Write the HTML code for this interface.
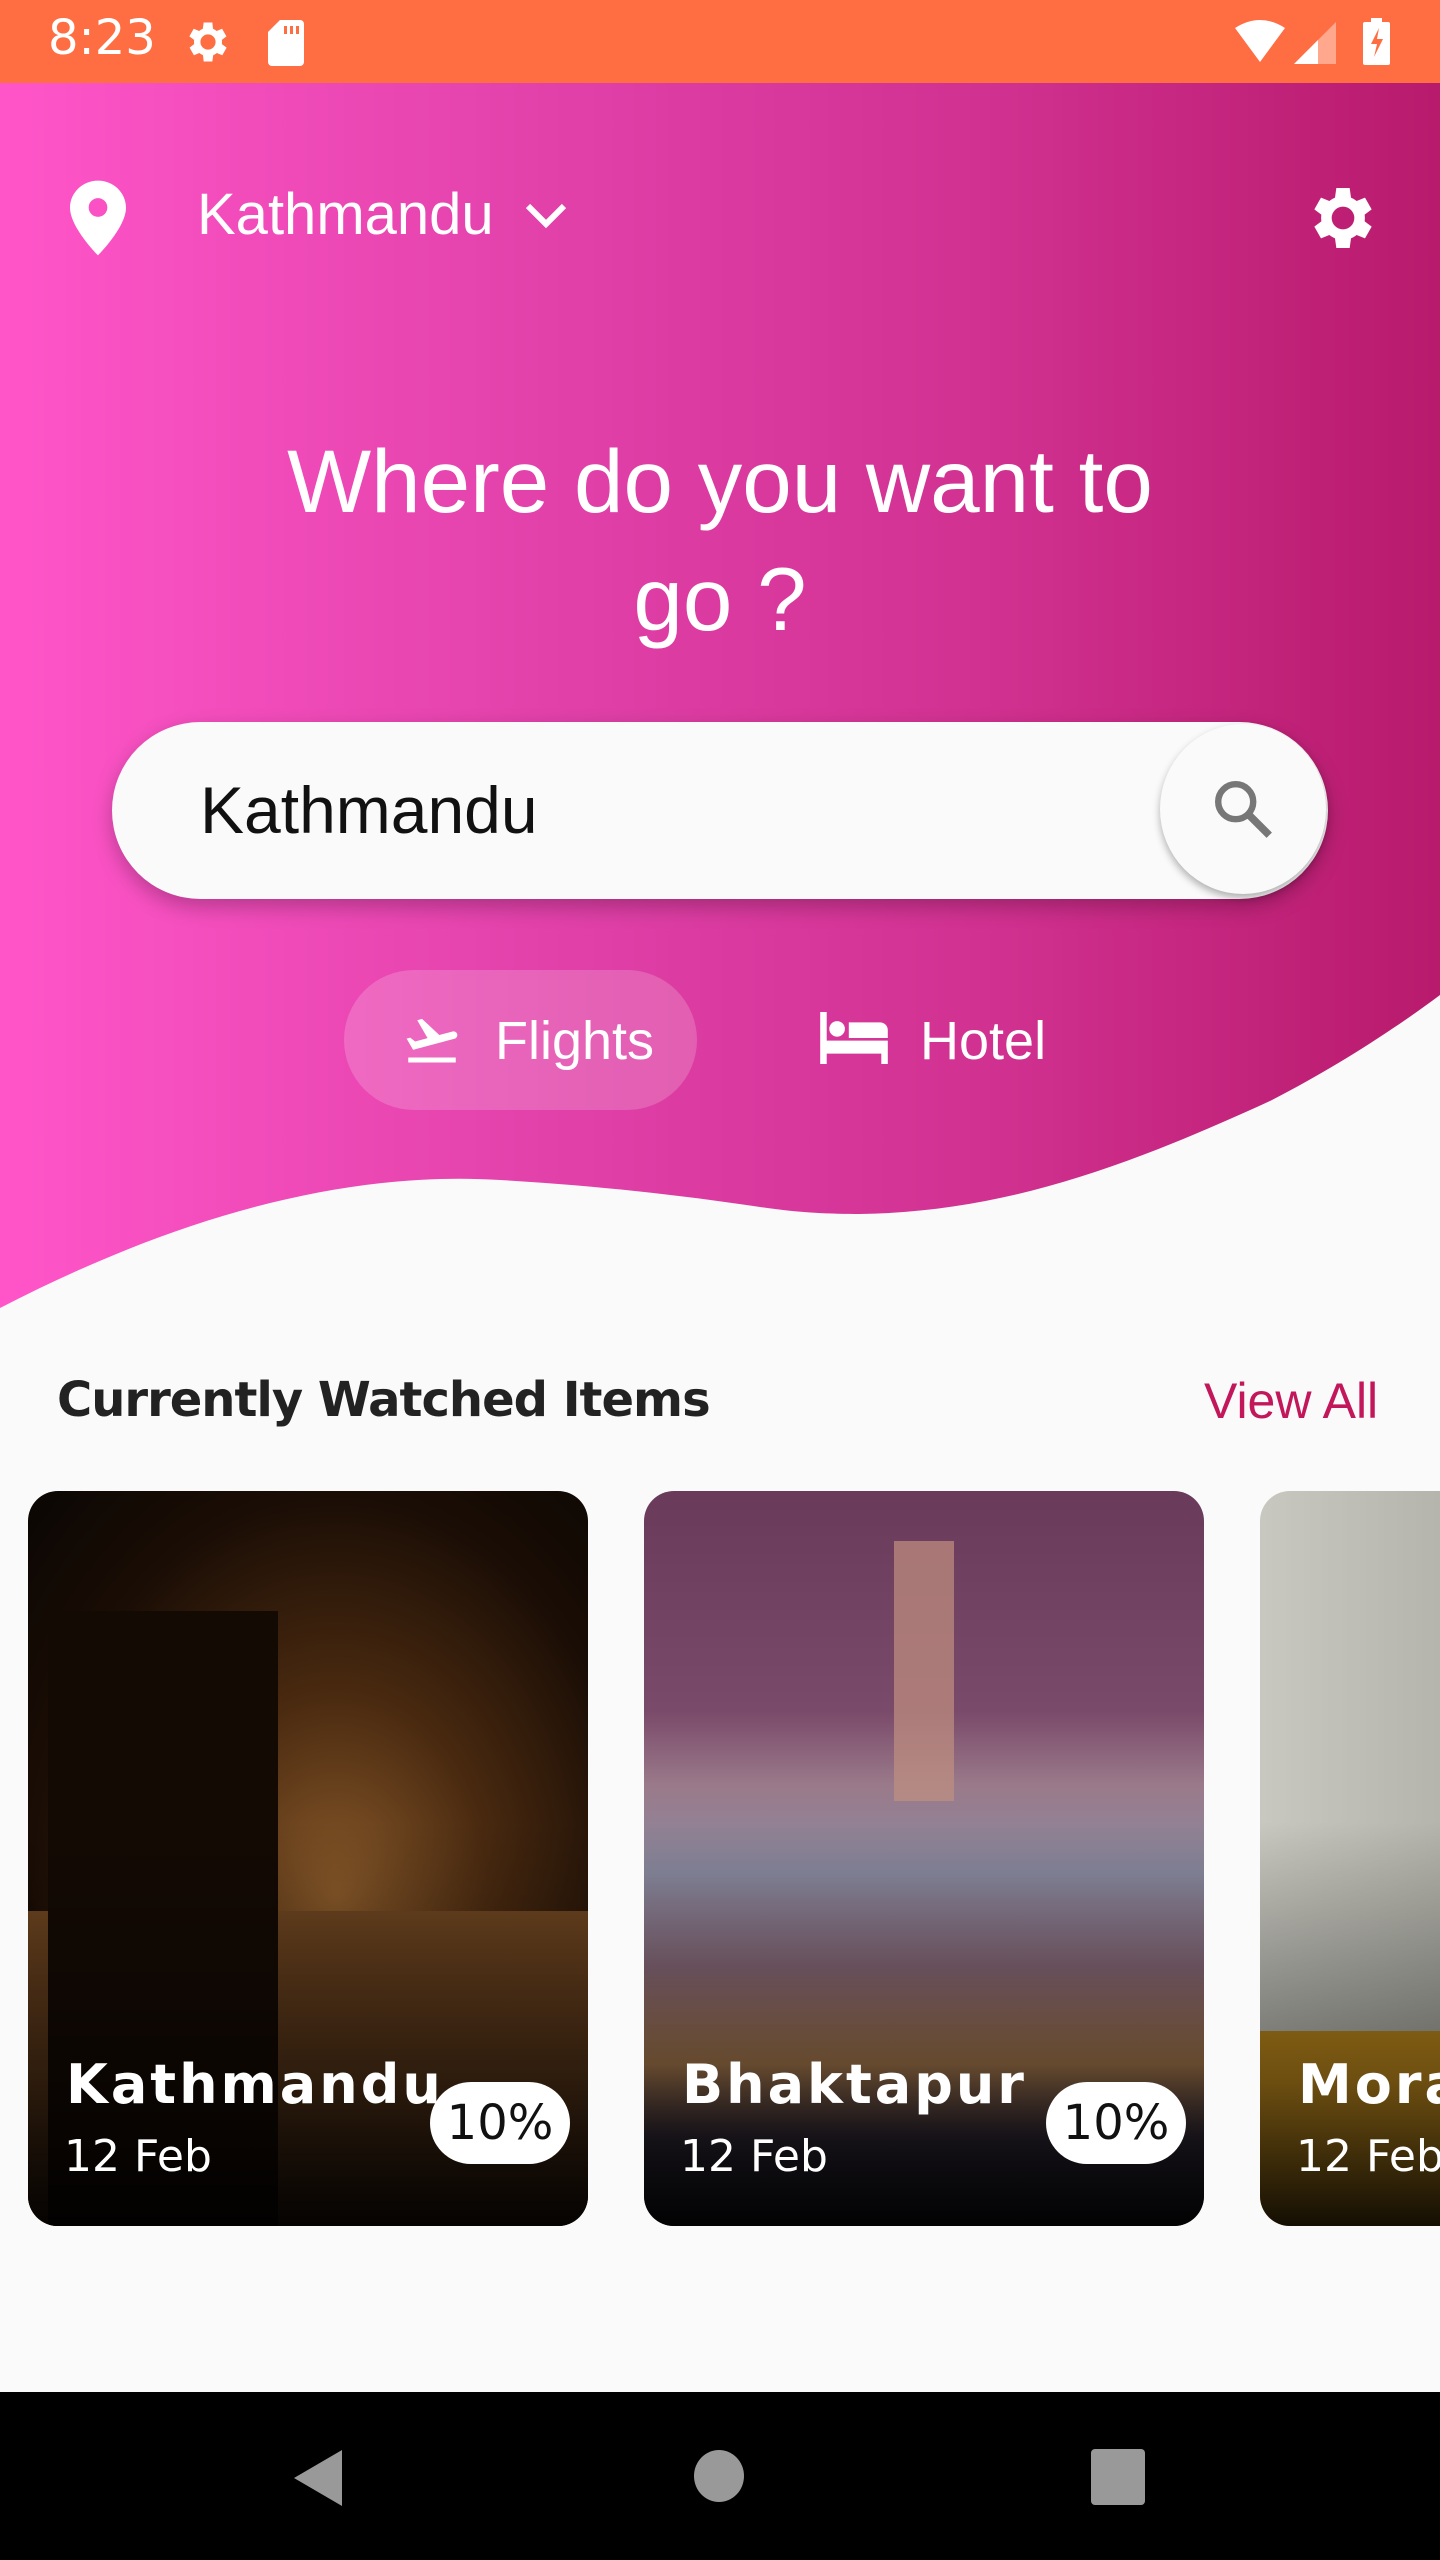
<!DOCTYPE html>
<html><head><meta charset="utf-8"><style>
*{margin:0;padding:0;box-sizing:border-box}
body{width:1440px;height:2560px;background:#fafafa;position:relative;overflow:hidden;font-family:"Liberation Sans","DejaVu Sans",sans-serif}
.abs{position:absolute}
.status{left:0;top:0;width:1440px;height:83px;background:#ff6e42}
.hdr{left:0;top:83px;width:1440px;height:1240px;background:linear-gradient(90deg,#ff55c9 0%,#e040a8 40%,#d0308f 70%,#b81a6c 100%)}
.w{color:#fff}
.card{top:1491px;width:560px;height:735px;border-radius:30px;overflow:hidden}
.ct{left:38px;top:562px;font-size:54px;font-weight:bold;letter-spacing:3px;color:#fff;font-family:"DejaVu Sans",sans-serif}
.cd{left:36px;top:640px;font-size:44px;color:#fff;font-family:"DejaVu Sans",sans-serif}
.badge{left:402px;top:591px;width:140px;height:82px;border-radius:41px;background:#fff;font-size:48px;color:#111;text-align:center;line-height:82px;font-family:"DejaVu Sans",sans-serif}
.shade{left:0;top:0;width:100%;height:100%;background:linear-gradient(180deg,rgba(0,0,0,0) 45%,rgba(0,0,0,.45) 80%,rgba(0,0,0,.9) 100%)}
</style></head><body>
<div class="abs status">
 <div class="abs w" style="left:48px;top:10px;font-size:48px;font-family:'DejaVu Sans',sans-serif">8:23</div>
 <svg class="abs" style="left:182px;top:16px" width="52" height="52" viewBox="0 0 24 24"><path fill="#fff" d="M19.4 13a7.5 7.5 0 000-2l2.1-1.6-2-3.5-2.5 1a7 7 0 00-1.7-1L15 3h-4l-.4 2.9a7 7 0 00-1.7 1l-2.5-1-2 3.5L6.6 11a7.5 7.5 0 000 2l-2.1 1.6 2 3.5 2.5-1a7 7 0 001.7 1L11 21h4l.4-2.9a7 7 0 001.7-1l2.5 1 2-3.5zM13 15.5a3.5 3.5 0 110-7 3.5 3.5 0 010 7z" transform="translate(-1 0)"/></svg>
 <svg class="abs" style="left:268px;top:20px" width="36" height="46" viewBox="0 0 18 23"><path fill="#fff" d="M6 0h10a2 2 0 012 2v19a2 2 0 01-2 2H2a2 2 0 01-2-2V6z"/><path fill="#ff6e42" d="M8 3h1.5v4H8zm3 0h1.5v4H11zm3 0h1.5v4H14z"/></svg>
 <svg class="abs" style="left:1233px;top:20px" width="54" height="43" viewBox="0 0 54 43"><path fill="#fff" d="M2 8Q27-8 52 8L27 42z"/></svg>
 <svg class="abs" style="left:1294px;top:22px" width="42" height="42" viewBox="0 0 42 42"><path fill="#fff" opacity=".4" d="M42 0V42H0z"/><path fill="#fff" d="M24 18V42H0z"/></svg>
 <svg class="abs" style="left:1363px;top:18px" width="27" height="47" viewBox="0 0 27 47"><rect x="8" y="0" width="11" height="5" fill="#fff"/><rect x="0" y="4" width="27" height="43" rx="2" fill="#fff"/><path fill="#ff6e42" d="M16 10L8 26h6l-3 13 9-18h-6z"/></svg>
</div>
<div class="abs hdr"></div>
<svg class="abs" style="left:0;top:0" width="1440" height="1400"><path fill="#fafafa" d="M0 1308C170 1220 340 1170 500 1180C600 1186 680 1195 760 1207C800 1213 830 1214 860 1214C1000 1212 1120 1170 1272 1100C1340 1065 1400 1025 1440 995V1400H0z"/></svg>

<svg class="abs" style="left:70px;top:180px" width="56" height="76" viewBox="0 0 24 32"><path fill="#fff" d="M12 0C5.4 0 0 5.2 0 11.6 0 20 12 32 12 32s12-12 12-20.4C24 5.2 18.6 0 12 0zm0 15.5a4 4 0 110-8 4 4 0 010 8z"/></svg>
<div class="abs w" style="left:197px;top:181px;font-size:58px">Kathmandu</div>
<svg class="abs" style="left:524px;top:200px" width="44" height="30" viewBox="0 0 44 30"><path d="M4 6l18 18L40 6" stroke="#fff" stroke-width="6" fill="none"/></svg>
<svg class="abs" style="left:1303px;top:178px" width="80" height="80" viewBox="0 0 24 24"><path fill="#fff" d="M19.4 13a7.5 7.5 0 000-2l2.1-1.6-2-3.5-2.5 1a7 7 0 00-1.7-1L14.9 3h-4l-.4 2.9a7 7 0 00-1.7 1l-2.5-1-2 3.5L6.4 11a7.5 7.5 0 000 2l-2.1 1.6 2 3.5 2.5-1a7 7 0 001.7 1l.4 2.9h4l.4-2.9a7 7 0 001.7-1l2.5 1 2-3.5zM12.9 15.4a3.4 3.4 0 110-6.8 3.4 3.4 0 010 6.8z" transform="translate(-0.9 0)"/></svg>

<div class="abs w" style="left:0;top:422px;width:1440px;text-align:center;font-size:89px;line-height:118px">Where do you want to<br>go ?</div>

<div class="abs" style="left:112px;top:722px;width:1216px;height:177px;border-radius:90px;background:#fafafa;box-shadow:0 8px 20px rgba(0,0,0,.25)"></div>
<div class="abs" style="left:200px;top:772px;font-size:66px;color:#111">Kathmandu</div>
<div class="abs" style="left:1160px;top:724px;width:166px;height:170px;border-radius:50%;background:#fafafa;box-shadow:0 4px 8px rgba(0,0,0,.3)"></div>
<svg class="abs" style="left:1208px;top:774px" width="70" height="70" viewBox="0 0 24 24"><circle cx="9.5" cy="9.5" r="6" stroke="#777" stroke-width="2.2" fill="none"/><path d="M14 14l7 7" stroke="#777" stroke-width="2.6"/></svg>

<div class="abs" style="left:344px;top:970px;width:353px;height:140px;border-radius:70px;background:rgba(255,255,255,.18)"></div>
<svg class="abs" style="left:400px;top:1010px" width="64" height="60" viewBox="0 0 24 24"><path fill="#fff" d="M2.5 19h19v2h-19zm19.57-9.36c-.21-.8-1.04-1.28-1.84-1.06L14.92 10l-6.9-6.43-1.93.51 4.140 7.17-4.97 1.33-1.97-1.54-1.45.39 2.59 4.49s7.12-1.9 16.57-4.43c.81-.23 1.28-1.05 1.07-1.85z"/></svg>
<div class="abs w" style="left:495px;top:1010px;font-size:54px">Flights</div>
<svg class="abs" style="left:820px;top:1012px" width="68" height="52" viewBox="0 0 26 20"><path fill="#fff" d="M0 0h2.5v11H26v9h-2.5v-4h-21v4H0z M11 4h12a3 3 0 013 3v3H11z"/><circle cx="6.5" cy="6.5" r="3" fill="#fff"/></svg>
<div class="abs w" style="left:920px;top:1010px;font-size:54px">Hotel</div>

<div class="abs" style="left:57px;top:1372px;font-size:48px;font-weight:bold;color:#222;font-family:'DejaVu Sans',sans-serif;letter-spacing:-1px">Currently Watched Items</div>
<div class="abs" style="left:1204px;top:1372px;font-size:50px;color:#c2185b">View All</div>

<div class="abs card" style="left:28px;background:radial-gradient(ellipse at 55% 55%,#8a5a2a 0%,#4a2a10 35%,#1a0d05 70%,#0a0603 100%)">
 <div class="abs" style="left:0;top:420px;width:560px;height:320px;background:linear-gradient(180deg,#6e4520,#3a2210)"></div>
 <div class="abs" style="left:20px;top:120px;width:230px;height:620px;background:#140a04"></div>
 <div class="abs shade"></div>
 <div class="abs ct">Kathmandu</div><div class="abs cd">12 Feb</div><div class="abs badge">10%</div>
</div>
<div class="abs card" style="left:644px;background:linear-gradient(180deg,#6a3a5a 0%,#7a4a6a 30%,#9a7a8a 40%,#8a8aa0 52%,#8a6a7a 65%,#b08050 78%,#3a3040 88%,#1a1a24 100%)">
 <div class="abs" style="left:250px;top:50px;width:60px;height:260px;background:#c09080;opacity:.7"></div>
 <div class="abs shade"></div>
 <div class="abs ct">Bhaktapur</div><div class="abs cd">12 Feb</div><div class="abs badge">10%</div>
</div>
<div class="abs card" style="left:1260px;background:linear-gradient(90deg,#c8c8c0 0%,#b0b0a8 40%,#303840 70%,#222a30 100%)">
 <div class="abs" style="left:0;top:540px;width:200px;height:200px;background:#c8901e"></div>
 <div class="abs shade"></div>
 <div class="abs ct">Mora</div><div class="abs cd">12 Feb</div>
</div>

<div class="abs" style="left:0;top:2392px;width:1440px;height:168px;background:#000"></div>
<svg class="abs" style="left:290px;top:2448px" width="56" height="60" viewBox="0 0 56 60"><path fill="#999" d="M52 2v56L4 30z"/></svg>
<div class="abs" style="left:694px;top:2450px;width:50px;height:52px;border-radius:50%;background:#999"></div>
<div class="abs" style="left:1091px;top:2449px;width:54px;height:56px;border-radius:4px;background:#999"></div>
</body></html>
